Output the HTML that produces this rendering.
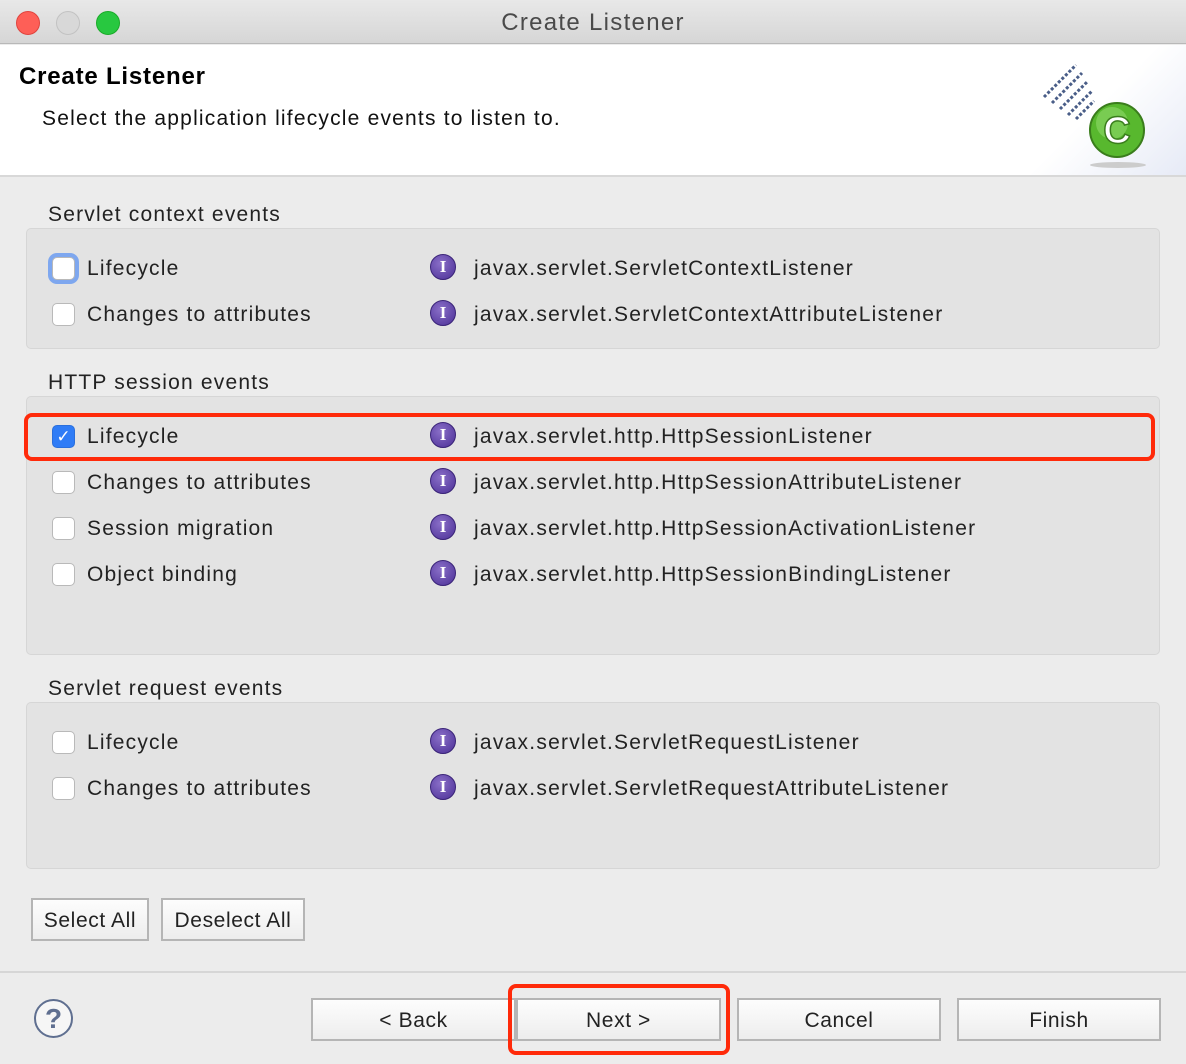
<!DOCTYPE html>
<html><head><style>
*{margin:0;padding:0;box-sizing:border-box}
body{width:1186px;height:1064px;background:#ececec;font-family:"Liberation Sans",sans-serif;color:#222;position:relative;overflow:hidden}
.abs{position:absolute}
.title{left:0;top:0;width:1186px;height:44px;background:linear-gradient(#e8e8e8,#d6d6d6);border-bottom:1px solid #b8b8b8;text-align:center;font-size:24px;line-height:46px;color:#4a4a4a;letter-spacing:1.3px}
.dot{top:11px;width:24px;height:24px;border-radius:50%}
.header{left:0;top:45px;width:1186px;height:132px;background:#fff;border-bottom:2px solid #d8d8d8}
.grp{left:26px;width:1134px;background:#e3e3e3;border:1px solid #d6d6d6;border-radius:5px}
.lbl{font-size:21px;left:48px;letter-spacing:1.2px;margin-top:1px}
.cb{left:52px;width:23px;height:23px;background:#fff;border:1px solid #b9b9b9;border-radius:5px}
.t{font-size:21px;left:87px;letter-spacing:1.2px;margin-top:1px}
.ic{left:430px;width:26px;height:26px;border-radius:50%;background:radial-gradient(circle at 40% 35%,#8a6fc8,#4b2f96);border:1px solid #3a2478;color:#fff;font:bold 17px "Liberation Serif",serif;text-align:center;line-height:24px}
.cl{font-size:21px;left:474px;letter-spacing:1.25px;margin-top:1px}
.btn{height:43px;border:2px solid #b5b5b5;background:linear-gradient(#fdfdfd,#ededed);font-size:21px;text-align:center;line-height:41px;color:#222;letter-spacing:0.6px}
.red{border:4px solid #ff2a0a;border-radius:8px}
</style></head><body>
<div class="abs title">Create Listener</div>
<div class="abs dot" style="left:16px;background:#fe5f57;border:1px solid #e0443e"></div>
<div class="abs dot" style="left:56px;background:#d8d8d8;border:1px solid #c2c2c2"></div>
<div class="abs dot" style="left:96px;background:#28c840;border:1px solid #1aab29"></div>
<div class="abs header">
<div class="abs" style="left:19px;top:18px;font-size:24px;font-weight:bold;color:#000;letter-spacing:0.8px">Create Listener</div>
<div class="abs" style="left:42px;top:62px;font-size:21px;color:#111;letter-spacing:1.2px">Select the application lifecycle events to listen to.</div>
<div class="abs" style="left:1030px;top:0;width:156px;height:130px;background:linear-gradient(135deg,#fff 45%,#e6eaf6)"></div>
<svg class="abs" style="left:1040px;top:10px" width="130" height="120">
<g stroke="#4a5e88" stroke-width="3" stroke-dasharray="3 2">
<line x1="4" y1="42" x2="36" y2="10"/><line x1="12" y1="48" x2="42" y2="18"/><line x1="20" y1="54" x2="48" y2="26"/><line x1="28" y1="60" x2="52" y2="36"/><line x1="36" y1="64" x2="54" y2="46"/></g>
<ellipse cx="78" cy="110" rx="28" ry="3" fill="#ccc"/>
<circle cx="77" cy="75" r="27" fill="#58b82e" stroke="#3a7d1c" stroke-width="2"/>
<circle cx="72" cy="68" r="16" fill="#8fd86a" opacity=".6"/>
<text x="77" y="88" text-anchor="middle" font-family="Liberation Sans" font-weight="bold" font-size="38" fill="#fff" stroke="#3a7d1c" stroke-width="1.5">C</text>
</svg>
</div>

<div class="abs lbl" style="top:202px">Servlet context events</div>
<div class="abs grp" style="top:228px;height:121px"></div>
<div class="abs lbl" style="top:370px">HTTP session events</div>
<div class="abs grp" style="top:396px;height:259px"></div>
<div class="abs lbl" style="top:676px">Servlet request events</div>
<div class="abs grp" style="top:702px;height:167px"></div>

<div class="abs cb" style="top:257px;box-shadow:0 0 0 4px #7ea7ef"></div>
<div class="abs t" style="top:256px">Lifecycle</div>
<div class="abs ic" style="top:254px">I</div><div class="abs cl" style="top:256px">javax.servlet.ServletContextListener</div>
<div class="abs cb" style="top:303px"></div>
<div class="abs t" style="top:302px">Changes to attributes</div>
<div class="abs ic" style="top:300px">I</div><div class="abs cl" style="top:302px">javax.servlet.ServletContextAttributeListener</div>

<div class="abs cb" style="top:425px;background:#2f7cf6;border-color:#2a6fdc;color:#fff;font-size:17px;text-align:center;line-height:21px">✓</div>
<div class="abs t" style="top:424px">Lifecycle</div>
<div class="abs ic" style="top:422px">I</div><div class="abs cl" style="top:424px">javax.servlet.http.HttpSessionListener</div>
<div class="abs cb" style="top:471px"></div>
<div class="abs t" style="top:470px">Changes to attributes</div>
<div class="abs ic" style="top:468px">I</div><div class="abs cl" style="top:470px">javax.servlet.http.HttpSessionAttributeListener</div>
<div class="abs cb" style="top:517px"></div>
<div class="abs t" style="top:516px">Session migration</div>
<div class="abs ic" style="top:514px">I</div><div class="abs cl" style="top:516px">javax.servlet.http.HttpSessionActivationListener</div>
<div class="abs cb" style="top:563px"></div>
<div class="abs t" style="top:562px">Object binding</div>
<div class="abs ic" style="top:560px">I</div><div class="abs cl" style="top:562px">javax.servlet.http.HttpSessionBindingListener</div>

<div class="abs cb" style="top:731px"></div>
<div class="abs t" style="top:730px">Lifecycle</div>
<div class="abs ic" style="top:728px">I</div><div class="abs cl" style="top:730px">javax.servlet.ServletRequestListener</div>
<div class="abs cb" style="top:777px"></div>
<div class="abs t" style="top:776px">Changes to attributes</div>
<div class="abs ic" style="top:774px">I</div><div class="abs cl" style="top:776px">javax.servlet.ServletRequestAttributeListener</div>

<div class="abs red" style="left:24px;top:413px;width:1131px;height:48px"></div>

<div class="abs btn" style="left:31px;top:898px;width:118px">Select All</div>
<div class="abs btn" style="left:161px;top:898px;width:144px">Deselect All</div>
<div class="abs" style="left:0;top:971px;width:1186px;height:2px;background:#d6d6d6"></div>

<div class="abs" style="left:34px;top:999px;width:39px;height:39px;border-radius:50%;border:2px solid #5f6f90;background:#f6f6f6;text-align:center;font:bold 28px/35px 'Liberation Sans';color:#5f6f90">?</div>
<div class="abs btn" style="left:311px;top:998px;width:205px">&lt; Back</div>
<div class="abs btn" style="left:516px;top:998px;width:205px">Next &gt;</div>
<div class="abs btn" style="left:737px;top:998px;width:204px">Cancel</div>
<div class="abs btn" style="left:957px;top:998px;width:204px">Finish</div>
<div class="abs red" style="left:508px;top:984px;width:222px;height:71px"></div>
</body></html>
